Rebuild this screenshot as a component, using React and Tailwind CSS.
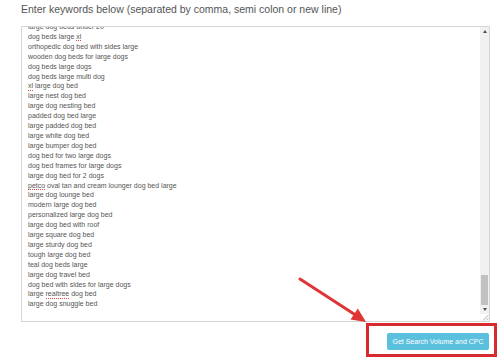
import React from "react";

// keyword list shown in the textarea (scrolled to near the bottom)
const keywords = [
  ["large dog beds under 20"],
  ["dog beds large ", "xl"],
  ["orthopedic dog bed with sides large"],
  ["wooden dog beds for large dogs"],
  ["dog beds large dogs"],
  ["dog beds large multi dog"],
  ["", "xl", " large dog bed"],
  ["large nest dog bed"],
  ["large dog nesting bed"],
  ["padded dog bed large"],
  ["large padded dog bed"],
  ["large white dog bed"],
  ["large bumper dog bed"],
  ["dog bed for two large dogs"],
  ["dog bed frames for large dogs"],
  ["large dog bed for 2 dogs"],
  ["", "petco", " oval tan and cream lounger dog bed large"],
  ["large dog lounge bed"],
  ["modern large dog bed"],
  ["personalized large dog bed"],
  ["large dog bed with roof"],
  ["large square dog bed"],
  ["large sturdy dog bed"],
  ["tough large dog bed"],
  ["teal dog beds large"],
  ["large dog travel bed"],
  ["dog bed with sides for large dogs"],
  ["large ", "realtree", " dog bed"],
  ["large dog snuggle bed"],
];

// spellcheck words get a thin red dotted line under them
const Line = ({ parts }) => {
  return (
    <div className="whitespace-pre">
      {parts[0]}
      {parts[1] && (
        <span className="border-b border-dotted border-[#e04848] pb-[0.5px]">
          {parts[1]}
        </span>
      )}
      {parts[2]}
    </div>
  );
};

const Scrollbar = () => {
  return (
    <div className="w-[9px] flex flex-col bg-[#f1f1f1]">
      <div className="h-[9px] flex items-center justify-center">
        <div className="w-0 h-0 border-l-[2px] border-r-[2px] border-b-[3px] border-l-transparent border-r-transparent border-b-[#505050]" />
      </div>
      <div className="flex-1 flex flex-col justify-end">
        <div className="h-[30px] mx-px bg-[#c1c1c1]" />
      </div>
      <div className="h-[9px] flex items-center justify-center">
        <div className="w-0 h-0 border-l-[2px] border-r-[2px] border-t-[3px] border-l-transparent border-r-transparent border-t-[#505050]" />
      </div>
      <div className="h-[7px] bg-white flex items-end justify-end">
        <svg width="7" height="7" viewBox="0 0 7 7">
          <path d="M6.5 1 L1 6.5 M6.5 4 L4 6.5" stroke="#9a9a9a" strokeWidth="0.8" />
        </svg>
      </div>
    </div>
  );
};

const App = () => {
  return (
    <div className="relative w-[500px] h-[360px] bg-white overflow-hidden font-['Liberation_Sans',Arial,sans-serif]">
      {/* heading */}
      <div className="h-[26px] pt-[4px] pl-[21px] text-[10.5px] leading-[10.5px] text-[#555]">
        Enter keywords below (separated by comma, semi colon or new line)
      </div>

      {/* textarea */}
      <div className="ml-[21px] w-[469px] h-[296px] border border-[#d6d6d6] flex">
        <div className="flex-1 overflow-hidden pl-[6px]">
          <div className="-mt-[5px] text-[7px] leading-[9.9px] text-[#555]">
            {keywords.map((parts, index) => (
              <Line key={index} parts={parts} />
            ))}
          </div>
        </div>
        <Scrollbar />
      </div>

      {/* submit */}
      <div className="mt-[11px] flex justify-end pr-[11px]">
        <button className="w-[102px] h-[17px] rounded-[2px] bg-[#5bc0de] text-white text-[7px] leading-none">
          Get Search Volume and CPC
        </button>
      </div>

      {/* annotation: red box round the button */}
      <div className="absolute left-[366px] top-[323px] w-[131px] h-[34px] border-[3px] border-[#d62a2f]" />

      {/* annotation: arrow */}
      <svg className="absolute left-0 top-0" width="500" height="360" viewBox="0 0 500 360">
        <line x1="300" y1="279" x2="354" y2="314" stroke="#e03535" strokeWidth="3" strokeLinecap="round" />
        <polygon points="366,322 350.5,319.5 357.8,308.6" fill="#e03535" />
      </svg>
    </div>
  );
};

export default App;
